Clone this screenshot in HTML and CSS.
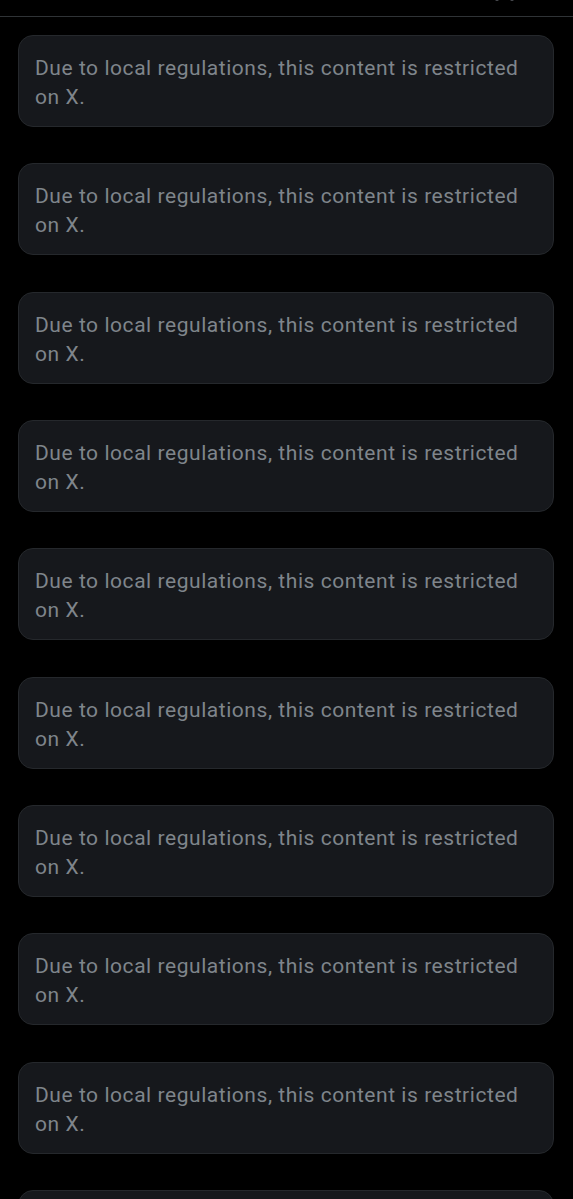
FILE: index.html
```html
<html>
<head>
    <link rel="stylesheet" href="styles.css">
</head>
<body>

<div class="topbar">
    <svg class="topicon" width="24" height="6" viewBox="0 0 24 6"><circle cx="4" cy="-1" r="2" fill="#4a4d52"/><circle cx="19" cy="-1" r="2" fill="#4a4d52"/></svg>
</div>

<div class="feed">
    <div class="notice">Due to local regulations, this content is restricted on X.</div>
    <div class="notice">Due to local regulations, this content is restricted on X.</div>
    <div class="notice">Due to local regulations, this content is restricted on X.</div>
    <div class="notice">Due to local regulations, this content is restricted on X.</div>
    <div class="notice">Due to local regulations, this content is restricted on X.</div>
    <div class="notice">Due to local regulations, this content is restricted on X.</div>
    <div class="notice">Due to local regulations, this content is restricted on X.</div>
    <div class="notice">Due to local regulations, this content is restricted on X.</div>
    <div class="notice">Due to local regulations, this content is restricted on X.</div>
    <div class="notice">Due to local regulations, this content is restricted on X.</div>
</div>

</body>
</html>
```

FILE: styles.css
```css
html, body { margin: 0; padding: 0; background: #000; overflow: hidden; }
body { font-family: Roboto, "Noto Sans", sans-serif; width: 573px; height: 1199px; }
.topbar { height: 16px; border-bottom: 1px solid #2f3336; display: flex; justify-content: flex-end; padding-right: 56px; }
.topicon { display: block; margin-top: 0; }
.feed { display: flex; flex-direction: column; gap: 36.33px; padding: 18px 19px 0 18px; }
.notice { flex: none; box-sizing: border-box; height: 92px; background: #16181c; border: 1px solid #25282c; border-radius: 15px; padding: 18px 18px 0 16px; color: #7f858b; font-size: 21px; letter-spacing: 0.55px; line-height: 29px; }
```
